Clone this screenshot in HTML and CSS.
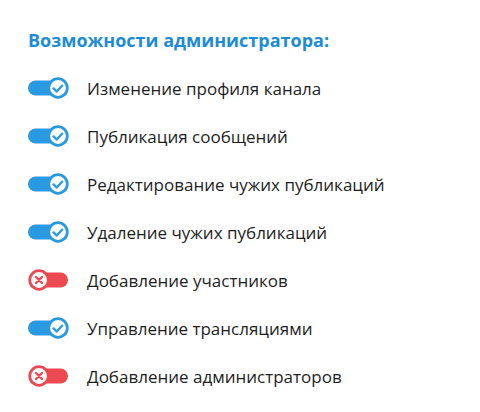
FILE: index.html
```html
<!DOCTYPE html>
<html>
<head>
<meta charset="utf-8">
<title>Права администратора</title>
<link rel="stylesheet" href="styles.css">
</head>
<body>
<div class="rights">
    <h2 class="rights-title">Возможности администратора:</h2>
    <ul class="rights-list">
        <li class="right on">
            <svg class="toggle" viewBox="0 0 42 24"><rect x="0" y="4.5" width="38" height="15" rx="7.5"/><circle cx="30" cy="12" r="9.3"/><path d="M25.6 12.4l3.1 3.1l5.4-5.8"/></svg>
            <span>Изменение профиля канала</span>
        </li>
        <li class="right on">
            <svg class="toggle" viewBox="0 0 42 24"><rect x="0" y="4.5" width="38" height="15" rx="7.5"/><circle cx="30" cy="12" r="9.3"/><path d="M25.6 12.4l3.1 3.1l5.4-5.8"/></svg>
            <span>Публикация сообщений</span>
        </li>
        <li class="right on">
            <svg class="toggle" viewBox="0 0 42 24"><rect x="0" y="4.5" width="38" height="15" rx="7.5"/><circle cx="30" cy="12" r="9.3"/><path d="M25.6 12.4l3.1 3.1l5.4-5.8"/></svg>
            <span>Редактирование чужих публикаций</span>
        </li>
        <li class="right on">
            <svg class="toggle" viewBox="0 0 42 24"><rect x="0" y="4.5" width="38" height="15" rx="7.5"/><circle cx="30" cy="12" r="9.3"/><path d="M25.6 12.4l3.1 3.1l5.4-5.8"/></svg>
            <span>Удаление чужих публикаций</span>
        </li>
        <li class="right off">
            <svg class="toggle" viewBox="0 0 42 24"><rect x="2" y="4.5" width="38" height="15" rx="7.5"/><circle cx="11" cy="12" r="9.3"/><path d="M8 9l6 6M14 9l-6 6"/></svg>
            <span>Добавление участников</span>
        </li>
        <li class="right on">
            <svg class="toggle" viewBox="0 0 42 24"><rect x="0" y="4.5" width="38" height="15" rx="7.5"/><circle cx="30" cy="12" r="9.3"/><path d="M25.6 12.4l3.1 3.1l5.4-5.8"/></svg>
            <span>Управление трансляциями</span>
        </li>
        <li class="right off">
            <svg class="toggle" viewBox="0 0 42 24"><rect x="2" y="4.5" width="38" height="15" rx="7.5"/><circle cx="11" cy="12" r="9.3"/><path d="M8 9l6 6M14 9l-6 6"/></svg>
            <span>Добавление администраторов</span>
        </li>
    </ul>
</div>
</body>
</html>
```

FILE: styles.css
```css
body {
    margin: 0;
    padding: 0;
    background: #fff;
    font-family: "Open Sans", Arial, sans-serif;
}
.rights {
    padding: 28px 0 0 28px;
}
.rights-title {
    margin: 0;
    font-size: 18px;
    line-height: 24px;
    font-weight: bold;
    color: #1d8cd3;
}
.rights-list {
    list-style: none;
    margin: 12px 0 0;
    padding: 0;
}
.right {
    display: flex;
    align-items: center;
    gap: 17px;
    height: 48px;
    font-size: 17px;
    color: #1e1e1e;
}
.toggle {
    width: 42px;
    height: 24px;
    flex: none;
}
.toggle circle {
    fill: #fff;
    stroke-width: 2.8;
}
.toggle path {
    fill: none;
    stroke-width: 2.4;
    stroke-linecap: round;
    stroke-linejoin: round;
}
.on .toggle rect { fill: #2a9ae0; }
.on .toggle circle,
.on .toggle path { stroke: #2a9ae0; }
.off .toggle rect { fill: #ec4a50; }
.off .toggle circle,
.off .toggle path { stroke: #ec4a50; }
```
